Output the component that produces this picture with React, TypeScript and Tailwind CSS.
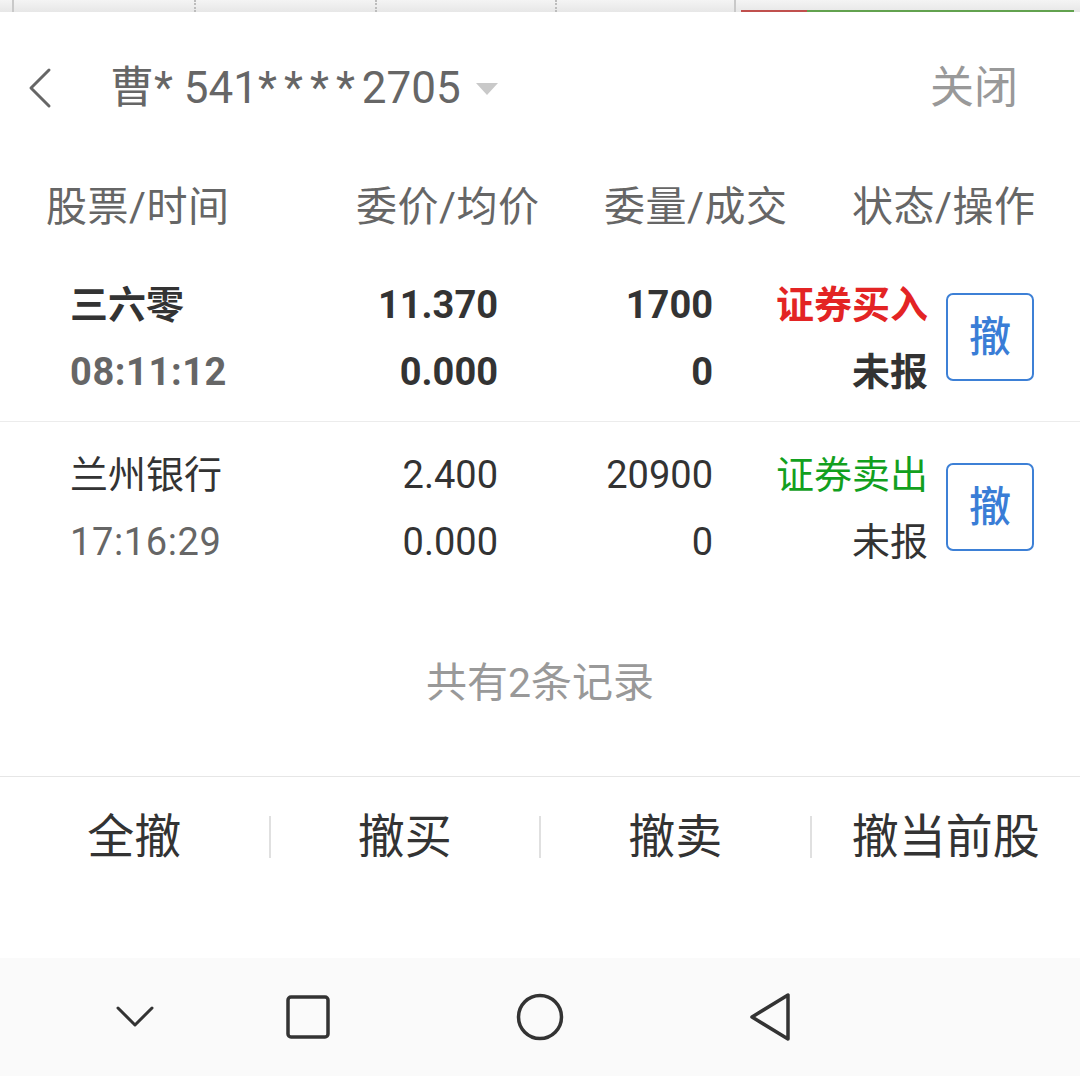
import React from 'react';

type Order = {
  name: string;
  time: string;
  price: string;
  avg: string;
  qty: string;
  done: string;
  side: string;
  buy: boolean;
  status: string;
  bold: boolean;
};

const orders: Order[] = [
  { name: '三六零', time: '08:11:12', price: '11.370', avg: '0.000', qty: '1700', done: '0', side: '证券买入', buy: true, status: '未报', bold: true },
  { name: '兰州银行', time: '17:16:29', price: '2.400', avg: '0.000', qty: '20900', done: '0', side: '证券卖出', buy: false, status: '未报', bold: false },
];

const ChartStrip: React.FC = () => (
  <div className="flex h-[12px] bg-linear-to-b from-[#f4f4f4] to-[#e7e7e7]">
    <div className="w-[12px]" />
    <div className="w-[182px] border-l-2 border-[#c9c9c9]" />
    <div className="w-[181px] border-l-2 border-dotted border-[#bdbdbd]" />
    <div className="w-[180px] border-l-2 border-dotted border-[#bdbdbd]" />
    <div className="w-[179px] border-l-2 border-dotted border-[#bdbdbd]" />
    <div className="flex flex-1 items-end border-l-2 border-[#c9c9c9] pl-[5px] pr-[6px]">
      <div className="flex h-[2px] w-full">
        <div className="w-[66px] bg-[#c0504d]" />
        <div className="flex-1 bg-[#62a24f]" />
      </div>
    </div>
  </div>
);

const OrderRow: React.FC<{ o: Order; last?: boolean }> = ({ o, last }) => {
  const weight = o.bold ? 'font-bold' : 'font-normal';
  return (
    <div className={`flex items-center pl-[70px] pt-[20px] pb-[15px] ${last ? '' : 'border-b border-[#ececec]'}`}>
      <div className={`w-[200px] ${weight}`}>
        <div className="h-[67px] leading-[67px] text-[#333]">{o.name}</div>
        <div className="h-[67px] leading-[67px] tracking-[0.6px] text-[#666]">{o.time}</div>
      </div>
      <div className={`w-[228px] text-right text-[#333] ${weight}`}>
        <div className="h-[67px] leading-[67px]">{o.price}</div>
        <div className="h-[67px] leading-[67px]">{o.avg}</div>
      </div>
      <div className={`w-[215px] text-right text-[#333] ${weight}`}>
        <div className="h-[67px] leading-[67px]">{o.qty}</div>
        <div className="h-[67px] leading-[67px]">{o.done}</div>
      </div>
      <div className={`w-[215px] text-right ${weight}`}>
        <div className={`h-[67px] leading-[67px] ${o.buy ? 'text-[#e32424]' : 'text-[#12a01e]'}`}>{o.side}</div>
        <div className="h-[67px] leading-[67px] text-[#333]">{o.status}</div>
      </div>
      <button className="ml-[18px] mb-[4px] flex h-[88px] w-[88px] items-center justify-center rounded-[7px] border-[2.5px] border-[#3d80d6] text-[42px] font-medium text-[#3a7dd6]">
        撤
      </button>
    </div>
  );
};

const App: React.FC = () => {
  return (
    <div className="flex h-[1076px] w-[1080px] flex-col bg-white font-['Roboto','Noto_Sans_CJK_SC',sans-serif]">
      <ChartStrip />

      {/* header */}
      <div className="flex h-[152px] items-center">
        <svg className="ml-[26px] h-[42px] w-[28px]" viewBox="0 0 28 42" fill="none" stroke="#666" strokeWidth={3} strokeLinecap="round" strokeLinejoin="round">
          <path d="M23 3 L5 21 L23 39" />
        </svg>
        <div className="ml-[56px] whitespace-nowrap text-[44px] text-[#666]">
          曹* 541<span className="tracking-[7px]">****</span>2705
        </div>
        <svg className="ml-[15px] mt-[2px] h-[12px] w-[22px]" viewBox="0 0 22 12">
          <path d="M0 0 H22 L11 12 Z" fill="#c9c9c9" />
        </svg>
        <div className="ml-auto mr-[62px] text-[44px] text-[#999]">关闭</div>
      </div>

      {/* column titles */}
      <div className="flex h-[88px] items-center pl-[46px] text-[41px] text-[#666]">
        <div className="w-[182px] whitespace-nowrap tracking-[0.5px]">股票/时间</div>
        <div className="ml-[128px] w-[182px] whitespace-nowrap tracking-[0.5px]">委价/均价</div>
        <div className="ml-[66px] w-[182px] whitespace-nowrap tracking-[0.5px]">委量/成交</div>
        <div className="ml-[66px] w-[182px] whitespace-nowrap tracking-[0.5px]">状态/操作</div>
      </div>

      <div className="text-[38px]">
        {orders.map((o, i) => (
          <OrderRow key={o.name} o={o} last={i === orders.length - 1} />
        ))}
      </div>

      <div className="flex h-[186px] items-center justify-center border-b border-[#e6e6e6] text-[41px] text-[#999]">
        共有2条记录
      </div>

      {/* bottom actions */}
      <div className="flex h-[120px] items-center text-[47px] text-[#333]">
        <div className="flex-1 text-center">全撤</div>
        <div className="h-[42px] w-[2px] bg-[#e0e0e0]" />
        <div className="flex-1 text-center">撤买</div>
        <div className="h-[42px] w-[2px] bg-[#e0e0e0]" />
        <div className="flex-1 text-center">撤卖</div>
        <div className="h-[42px] w-[2px] bg-[#e0e0e0]" />
        <div className="flex-1 text-center">撤当前股</div>
      </div>
      <div className="flex-1" />

      {/* system nav bar */}
      <div className="flex h-[118px] items-center bg-[#fafafa]">
        <svg className="ml-[115px] h-[24px] w-[40px]" viewBox="0 0 40 24" fill="none" stroke="#333" strokeWidth={3} strokeLinecap="round" strokeLinejoin="round">
          <path d="M3 3 L20 20 L37 3" />
        </svg>
        <svg className="ml-[131px] h-[44px] w-[44px]" viewBox="0 0 44 44" fill="none" stroke="#333" strokeWidth={3.5}>
          <rect x="2" y="2" width="40" height="40" rx="3" />
        </svg>
        <svg className="ml-[186px] h-[48px] w-[48px]" viewBox="0 0 48 48" fill="none" stroke="#333" strokeWidth={3.5}>
          <circle cx="24" cy="24" r="21.5" />
        </svg>
        <svg className="ml-[184px] h-[50px] w-[46px]" viewBox="0 0 46 50" fill="none" stroke="#333" strokeWidth={3.5} strokeLinejoin="round">
          <path d="M40 3 L40 47 L4 25 Z" />
        </svg>
      </div>
    </div>
  );
};

export default App;
